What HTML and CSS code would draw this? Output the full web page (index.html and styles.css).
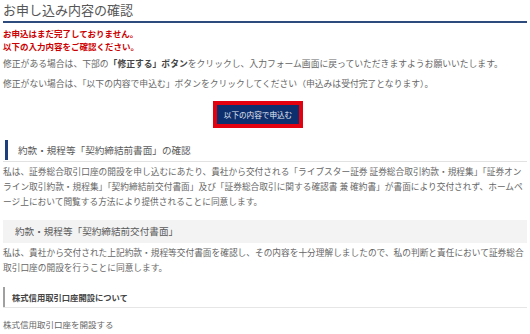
FILE: index.html
```html
<!DOCTYPE html>
<html lang="ja">
<head>
    <meta charset="UTF-8">
    <meta name="viewport" content="width=device-width, initial-scale=1.0">
    <title>お申し込み内容の確認</title>
    <link rel="stylesheet" href="styles.css">
</head>
<body>
    <h1 class="page-title">お申し込み内容の確認</h1>

    <div class="notice">
        <p>お申込はまだ完了しておりません。</p>
        <p>以下の入力内容をご確認ください。</p>
    </div>

    <p class="guide guide-first">修正がある場合は、下部の<b>「修正する」ボタン</b>をクリックし、入力フォーム画面に戻っていただきますようお願いいたします。</p>
    <p class="guide guide-second">修正がない場合は、「以下の内容で申込む」ボタンをクリックしてください（申込みは受付完了となります）。</p>

    <div class="submit-wrap">
        <button class="submit-btn">以下の内容で申込む</button>
    </div>

    <h2 class="sec-head sec-bar">
        <span class="bar"></span>
        <span>約款・規程等「契約締結前書面」の確認</span>
    </h2>
    <p class="body-text body-first">私は、証券総合取引口座の開設を申し込むにあたり、貴社から交付される「ライブスター証券 証券総合取引約款・規程集」「証券オンライン取引約款・規程集」「契約締結前交付書面」及び「証券総合取引に関する確認書 兼 確約書」が書面により交付されず、ホームページ上において閲覧する方法により提供されることに同意します。</p>

    <h2 class="sec-head sec-grey">約款・規程等「契約締結前交付書面」</h2>
    <p class="body-text body-second">私は、貴社から交付された上記約款・規程等交付書面を確認し、その内容を十分理解しましたので、私の判断と責任において証券総合取引口座の開設を行うことに同意します。</p>

    <h3 class="sub-head">
        <span class="bar-thin"></span>
        <span>株式信用取引口座開設について</span>
    </h3>
    <p class="last-text">株式信用取引口座を開設する</p>
</body>
</html>
```

FILE: styles.css
```css
body {
    font-family: "Noto Sans CJK JP", "Noto Sans", sans-serif;
    margin: 0;
    padding: 0 3px;
    color: #666;
    background: #fff;
}
p {
    margin: 0;
}
.page-title {
    margin: 0;
    padding: 1px 0 2px;
    font-size: 13px;
    line-height: 18px;
    font-weight: normal;
    color: #555;
    border-bottom: 2px solid #2d4b7c;
}
.notice {
    margin-top: 4px;
    font-size: 8.5px;
    line-height: 13px;
    font-weight: bold;
    color: #cc0000;
}
.guide {
    font-size: 8.8px;
    line-height: 13px;
}
.guide b {
    color: #444;
}
.guide-first {
    margin-top: 4px;
}
.guide-second {
    margin-top: 7px;
}
.submit-wrap {
    display: flex;
    justify-content: center;
    margin-top: 11px;
    padding-right: 14px;
}
.submit-btn {
    width: 90px;
    height: 27px;
    padding: 0;
    background-color: #0d2f6e;
    color: #e8ecf4;
    border: 4px solid #e3000f;
    font-family: inherit;
    font-size: 7.6px;
    cursor: pointer;
}
.sec-head {
    margin: 0;
    font-size: 9.6px;
    font-weight: normal;
    color: #5a5a5a;
}
.sec-bar {
    display: flex;
    align-items: center;
    height: 23px;
    margin-top: 10px;
    padding-left: 2px;
    border-bottom: 1px solid #e2e2e2;
}
.bar {
    width: 3px;
    height: 20px;
    margin-right: 10px;
    background-color: #1d3f7c;
}
.body-text {
    font-size: 8.7px;
    line-height: 15px;
}
.body-first {
    margin-top: 2px;
}
.sec-grey {
    margin-top: 11px;
    height: 23px;
    line-height: 23px;
    padding-left: 12px;
    background-color: #f3f3f3;
}
.body-second {
    margin-top: 3px;
    line-height: 14.5px;
}
.sub-head {
    display: flex;
    align-items: center;
    margin: 12px 0 0;
    height: 20px;
    font-size: 8.3px;
    color: #444;
    border-bottom: 1px solid #e6e6e6;
}
.bar-thin {
    width: 2px;
    height: 20px;
    margin-right: 7px;
    background-color: #a0a0a0;
}
.last-text {
    margin-top: 9px;
    font-size: 8.5px;
    line-height: 14px;
}
```
